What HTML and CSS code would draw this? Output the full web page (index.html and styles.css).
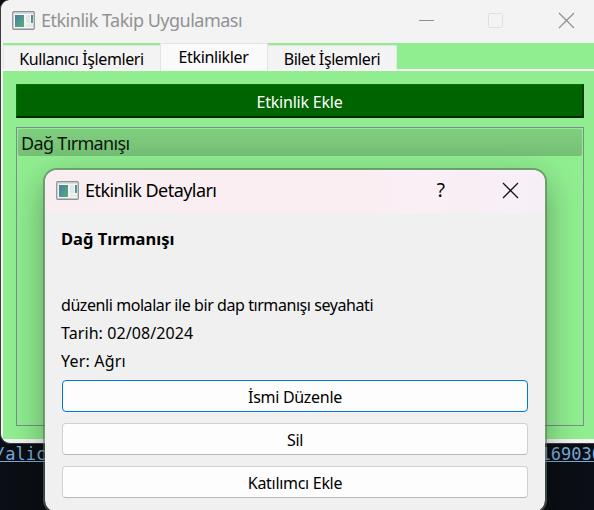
FILE: index.html
```html
<!DOCTYPE html>
<html lang="tr">
<head>
<meta charset="utf-8">
<title>Etkinlik Takip Uygulaması</title>
<link rel="stylesheet" href="styles.css">
</head>
<body>
<svg width="0" height="0" class="defs" aria-hidden="true">
  <defs>
    <linearGradient id="pane" x1="0" y1="0" x2="1" y2="1"><stop offset="0" stop-color="#4b7ca5"/><stop offset="1" stop-color="#55b078"/></linearGradient>
    <symbol id="app" viewBox="0 0 23 19">
      <rect x=".75" y=".75" width="21.5" height="17.5" rx="1" fill="#f3f5f5" stroke="#8f9193" stroke-width="1.3"/>
      <path d="M2 2.3H21" stroke="#d5d8da"/>
      <rect x="3" y="4" width="9" height="12" fill="url(#pane)"/>
      <rect x="14" y="4" width="4" height="8" fill="#e4e6e6"/>
      <rect x="19" y="4" width="2" height="8" fill="url(#pane)"/>
      <path d="M14 14.5h7" stroke="#e4e6e6" stroke-width="2"/>
    </symbol>
  </defs>
</svg>
<div class="desktop">
  <main class="window">
    <header class="titlebar">
      <svg class="app-icon"><use href="#app"/></svg>
      <span class="window-title">Etkinlik Takip Uygulaması</span>
      <svg class="controls" width="160" height="20" fill="none">
        <path d="M1 10.5h15" stroke="#8f8f8f"/>
        <rect x="70.5" y="3.5" width="14" height="14" rx="1" stroke="#e1e1e1"/>
        <path d="M141 3l15 15M156 3l-15 15" stroke="#8f8f8f" stroke-width="1.2"/>
      </svg>
    </header>
    <nav class="tabs">
      <span class="tab tab-users">Kullanıcı İşlemleri</span>
      <span class="tab tab-active">Etkinlikler</span>
      <span class="tab tab-tickets">Bilet İşlemleri</span>
    </nav>
    <section class="page">
      <button class="add">Etkinlik Ekle</button>
      <div class="list"><div class="list-item">Dağ Tırmanışı</div></div>
    </section>
  </main>
  <footer class="terminal"><span class="link">/alic</span><span class="link">169036</span></footer>
</div>
<div class="dialog">
  <header class="dialog-bar">
    <svg class="app-icon"><use href="#app"/></svg>
    <span class="dialog-title">Etkinlik Detayları</span>
    <span class="help">?</span>
    <svg class="close" width="17" height="17" fill="none"><path d="M1 1l15 15M16 1L1 16" stroke="#17151a" stroke-width="1.3"/></svg>
  </header>
  <div class="details">
    <h1>Dağ Tırmanışı</h1>
    <p class="description">düzenli molalar ile bir dap tırmanışı seyahati</p>
    <p class="date">Tarih: 02/08/2024</p>
    <p class="place">Yer: Ağrı</p>
    <div class="actions">
      <button class="action action-default">İsmi Düzenle</button>
      <button class="action">Sil</button>
      <button class="action">Katılımcı Ekle</button>
    </div>
  </div>
</div>
</body>
</html>
```
FILE: styles.css
```css
* { box-sizing: border-box; }
html, body { margin: 0; height: 100%; overflow: hidden; }
body { position: relative; font: 16px/20px "Noto Sans", "Open Sans", sans-serif; color: #000; background: #0b0e14; }
button { font: inherit; }
.defs { position: absolute; }
.desktop { height: 510px; overflow: hidden; display: flex; flex-direction: column; }
.window {
  flex: none; width: 610px; height: 444px;
  display: flex; flex-direction: column;
  border-left: 1px solid #3d3d40; border-bottom: 1px solid #3d3d40;
  border-radius: 9px 0 0 10px; background: #f3f3f3; overflow: hidden;
}
.titlebar { height: 43px; flex: none; display: flex; align-items: center; padding: 0 0 3px 11px; width: 593px; }
.app-icon { width: 23px; height: 19px; flex: none; }
.window-title { margin-left: 6px; font-size: 18px; letter-spacing: -.5px; color: #929292; flex: 1; white-space: nowrap; }
.controls { margin-right: 16px; flex: none; }
.tabs {
  flex: none; height: 28px; margin-left: 2px; display: flex; align-items: flex-start;
  background: #90ee90; border-bottom: 2px solid #fafafa;
}
.tab { height: 24px; margin-top: 2px; background: #f3f3f3; border: 1px solid #e3e6e3; border-bottom: 0; padding-top: 3px; letter-spacing: -.4px; text-align: center; white-space: nowrap; }
.tab-users { width: 157px; border-right: 0; padding-right: 1px; }
.tab-active { width: 108px; height: 28px; margin-top: 0; background: #fafafa; letter-spacing: -.36px; padding-right: 1px; }
.tab-tickets { width: 129px; border-left: 0; }
.page { flex: none; height: 368px; margin-left: 2px; width: 591px; padding: 13px 10px 13px 13px; background: #90ee90; display: flex; flex-direction: column; gap: 9px; }
.add { height: 34px; flex: none; padding: 2px 0 0; background: #006400; color: #fff; border: 1px solid #007800; border-right: 2px solid #003c00; border-bottom: 2px solid #002600; letter-spacing: -.22px; }
.list { flex: 1; border: 1px solid #828790; padding: 1px; }
.list-item { height: 27px; padding: 4px 0 0 3px; border-radius: 2px; background: linear-gradient(#7fce7f, #76c076); font-size: 18px; letter-spacing: -.66px; color: #0b160b; }
.terminal { display: flex; justify-content: space-between; margin: 0 -8px 0 -5px; font: 17px/20px "DejaVu Sans Mono", monospace; color: #78a9d6; }
.link { height: 18px; border-bottom: 1px solid #78a9d6; }
.dialog {
  position: absolute; left: 43px; top: 168px; width: 504px; height: 346px;
  border: 2px solid rgba(94, 112, 94, .6); border-radius: 14px; background: #f0f0f0; background-clip: padding-box;
  box-shadow: 0 12px 34px rgba(0, 0, 0, .32);
}
.dialog-bar { height: 43px; display: flex; align-items: center; padding: 0 26px 3px 11px; border-radius: 12px 12px 0 0; background: linear-gradient(90deg, #f8eef2, #fbeef3 60%, #f6f0f6); }
.dialog-title { margin-left: 6px; font-size: 18px; letter-spacing: -.55px; white-space: nowrap; }
.help { margin-left: auto; margin-right: 57px; font-size: 19px; }
.close { flex: none; }
.details { padding: 16px 17px 0 16px; }
h1 { margin: 0 0 46px; font-size: 16.5px; line-height: 20px; letter-spacing: 0; }
p { margin: 0 0 8px; line-height: 20px; white-space: nowrap; }
.description { letter-spacing: -.43px; }
.date { letter-spacing: .08px; }
.place { letter-spacing: .2px; }
.actions { display: flex; flex-direction: column; gap: 11px; margin: 9px 0 0 1px; }
.action { height: 32px; padding: 2px 0 0; border: 1px solid #d0d0d0; border-bottom-color: #b8b8b8; border-radius: 4px; background: #fdfdfd; color: #000; letter-spacing: -.3px; }
.action-default { border-color: #0078d4; }
```
